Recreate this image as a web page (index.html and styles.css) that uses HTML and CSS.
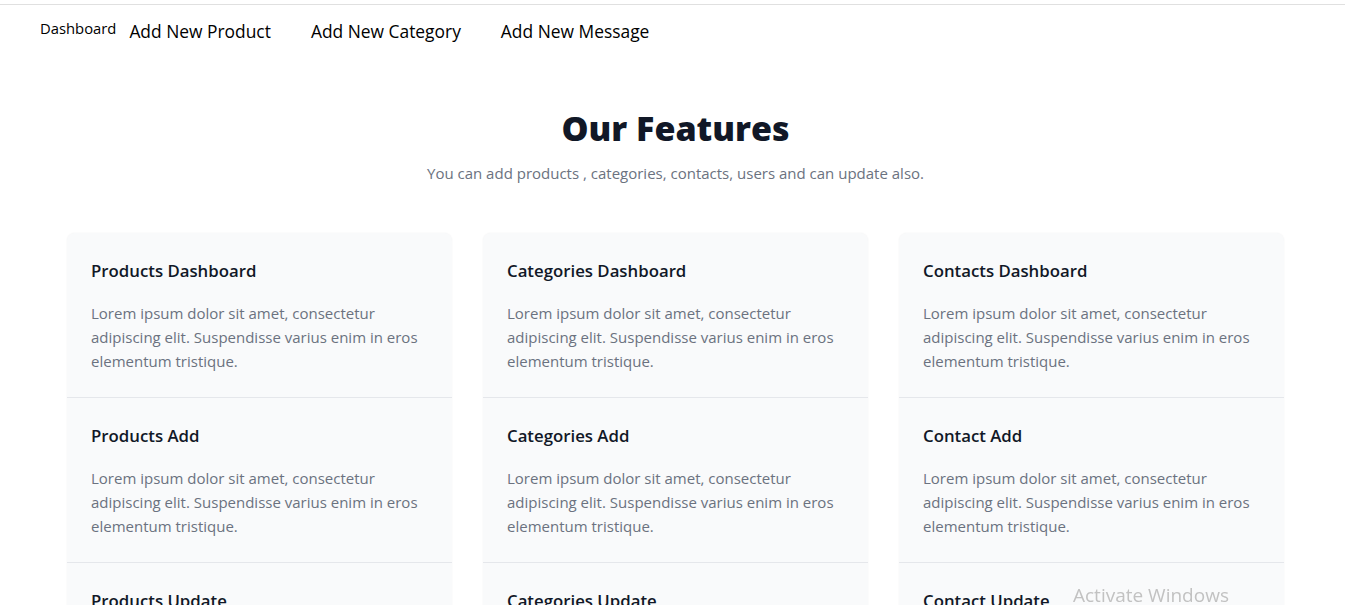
FILE: index.html
```html
<!DOCTYPE html>
<html lang="en">
<head>
<meta charset="utf-8">
<title>Our Features</title>
<link rel="stylesheet" href="styles.css">
</head>
<body>
<div class="topline"></div>
<nav class="nav">
  <a class="nav-brand" href="#">Dashboard</a>
  <a class="nav-link" href="#">Add New Product</a>
  <a class="nav-link" href="#">Add New Category</a>
  <a class="nav-link" href="#">Add New Message</a>
</nav>
<main class="main">
  <h1 class="title">Our Features</h1>
  <p class="subtitle">You can add products , categories, contacts, users and can update also.</p>
  <div class="grid">
    <div class="card">
      <div class="item"><h3>Products Dashboard</h3><p>Lorem ipsum dolor sit amet, consectetur adipiscing elit. Suspendisse varius enim in eros elementum tristique.</p></div>
      <div class="item"><h3>Products Add</h3><p>Lorem ipsum dolor sit amet, consectetur adipiscing elit. Suspendisse varius enim in eros elementum tristique.</p></div>
      <div class="item"><h3>Products Update</h3><p>Lorem ipsum dolor sit amet, consectetur adipiscing elit. Suspendisse varius enim in eros elementum tristique.</p></div>
    </div>
    <div class="card">
      <div class="item"><h3>Categories Dashboard</h3><p>Lorem ipsum dolor sit amet, consectetur adipiscing elit. Suspendisse varius enim in eros elementum tristique.</p></div>
      <div class="item"><h3>Categories Add</h3><p>Lorem ipsum dolor sit amet, consectetur adipiscing elit. Suspendisse varius enim in eros elementum tristique.</p></div>
      <div class="item"><h3>Categories Update</h3><p>Lorem ipsum dolor sit amet, consectetur adipiscing elit. Suspendisse varius enim in eros elementum tristique.</p></div>
    </div>
    <div class="card">
      <div class="item"><h3>Contacts Dashboard</h3><p>Lorem ipsum dolor sit amet, consectetur adipiscing elit. Suspendisse varius enim in eros elementum tristique.</p></div>
      <div class="item"><h3>Contact Add</h3><p>Lorem ipsum dolor sit amet, consectetur adipiscing elit. Suspendisse varius enim in eros elementum tristique.</p></div>
      <div class="item"><h3>Contact Update</h3><p>Lorem ipsum dolor sit amet, consectetur adipiscing elit. Suspendisse varius enim in eros elementum tristique.</p></div>
    </div>
  </div>
</main>
<div class="watermark">Activate Windows</div>
</body>
</html>
```
FILE: styles.css
```css
* { box-sizing: border-box; }
html, body { margin: 0; padding: 0; }
body {
  font-family: "Open Sans", "Noto Sans", sans-serif;
  background: #ffffff;
  color: #111827;
}
.topline {
  height: 5px;
  border-bottom: 1px solid #e0e0e0;
}
.nav {
  display: flex;
  align-items: center;
  padding: 9px 0 0 40px;
  height: 43px;
}
.nav a { text-decoration: none; color: #000; }
.nav-brand { font-size: 14.8px; margin-right: 13px; position: relative; top: -3px; }
.nav-link { font-size: 17.4px; margin-right: 40px; }
.main {
  margin: 0 0 0 67px;
  width: 1217px;
}
.title {
  margin: 56px 0 0;
  text-align: center;
  font-size: 34px;
  font-weight: 800;
  line-height: 48px;
  color: #111827;
}
.subtitle {
  margin: 9px 0 0;
  text-align: center;
  font-size: 15px;
  line-height: 24px;
  color: #6b7280;
}
.grid {
  margin-top: 48px;
  display: grid;
  grid-template-columns: repeat(3, 385px);
  column-gap: 31px;
}
.card {
  background: #f9fafb;
  border-radius: 8px;
  box-shadow: 0 0 2px rgba(0,0,0,0.06);
}
.item {
  padding: 24px;
  border-bottom: 1px solid #e5e7eb;
}
.item h3 {
  margin: 0;
  font-size: 16.8px;
  line-height: 28px;
  font-weight: 600;
  color: #111827;
}
.item p {
  margin: 16px 0 0;
  font-size: 15px;
  line-height: 24px;
  color: #6b7280;
}
.watermark {
  position: fixed;
  left: 1073px;
  top: 582px;
  font-size: 19px;
  color: #c2c2c2;
}
```
